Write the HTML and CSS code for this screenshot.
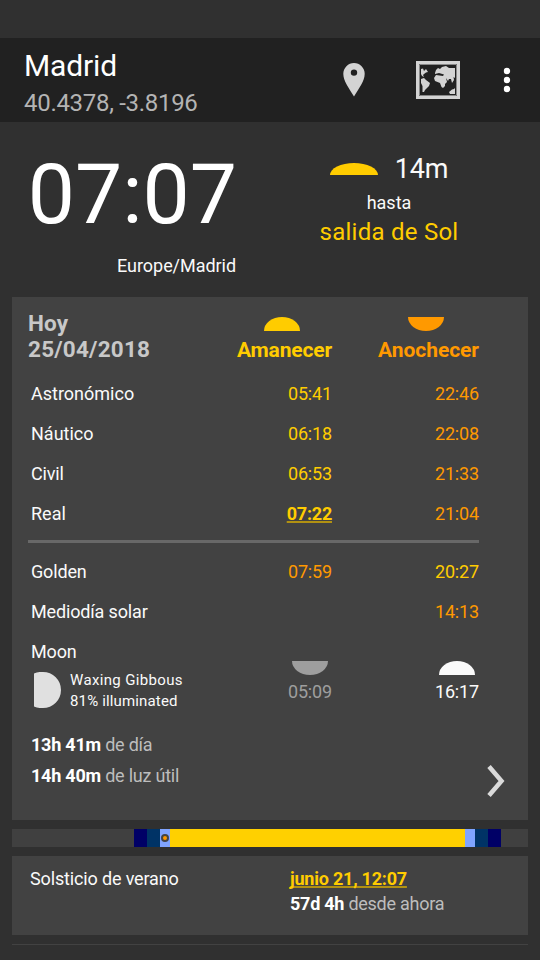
FILE: index.html
```html
<!DOCTYPE html>
<html lang="es">
<head>
<meta charset="utf-8">
<title>Madrid</title>
<link rel="stylesheet" href="styles.css">
</head>
<body>
<header class="appbar">
  <div class="place">
    <h1 class="city">Madrid</h1>
    <div class="coords">40.4378, -3.8196</div>
  </div>
  <svg class="pin" width="22" height="34" viewBox="0 0 22 34"><path fill="#d3d3d3" fill-rule="evenodd" d="M11 0A10.700 10.700 0 0 0 .3 10.700C.3 18 6 25 11 33.500C16 25 21.700 18 21.700 10.700A10.700 10.700 0 0 0 11 0ZM11 6.400a3.200 3.200 0 1 1 0 6.400a3.200 3.200 0 0 1 0-6.400Z"/></svg>
  <svg class="map" width="44" height="38" viewBox="0 0 44 38">
    <path fill="#d3d3d3" fill-rule="evenodd" d="M0 0H44V38H0ZM3 3V35H41V3Z"/>
    <path fill="none" stroke="#888" d="M3.500 3.500H40.500V34.500H3.500Z"/>
    <g fill="#d3d3d3">
      <path d="M5 8L7 7.500L8 10L10 8L12 11L10 11.500L8 13L7 14L8 16L6 15L5 13Z"/>
      <path d="M5 18L8 17L10 19L14 22L13 25L11 27L9 29L8 31H6.500V25L5 22Z"/>
      <path d="M19 12L20 9L22 7L24 8L26 6L30 5L33 7L39 7V17L37.500 16L38 19L36 22L35 18L33 18L32 20L30 17L31 21L29 23L29 25L27 27L25.500 26L24 22L19 20L18 17L20 14L27 15L28 13.500L23 12L19 13Z"/>
      <path d="M33 31L36 28.500L38 28L39 27V33L34 33Z"/>
    </g>
  </svg>
  <svg class="dots" width="8" height="26" viewBox="0 0 8 26"><g fill="#fff"><circle cx="4" cy="4" r="3.200"/><circle cx="4" cy="13" r="3.200"/><circle cx="4" cy="22" r="3.200"/></g></svg>
</header>

<section class="now">
  <div class="clock">
    <div class="time">07:07</div>
    <div class="zone">Europe/Madrid</div>
  </div>
  <div class="next">
    <div class="countdown"><span class="dome sun big"></span><span class="left">14m</span></div>
    <div class="until">hasta</div>
    <div class="event">salida de Sol</div>
  </div>
</section>

<main class="day">
  <div class="grid head">
    <div class="date">Hoy<br>25/04/2018</div>
    <div class="col sunrise"><span class="dome sun"></span><b class="am">Amanecer</b></div>
    <div class="col sunset"><span class="dome set"></span><b class="an">Anochecer</b></div>
  </div>
  <div class="grid row"><span class="name wide">Astronómico</span><span class="yellow">05:41</span><span class="orange">22:46</span></div>
  <div class="grid row"><span class="name wide">Náutico</span><span class="yellow">06:18</span><span class="orange">22:08</span></div>
  <div class="grid row"><span class="name">Civil</span><span class="yellow">06:53</span><span class="orange">21:33</span></div>
  <div class="grid row"><span class="name wide">Real</span><span class="yellow link">07:22</span><span class="orange">21:04</span></div>
  <div class="rule"></div>
  <div class="grid row"><span class="name">Golden</span><span class="orange">07:59</span><span class="yellow">20:27</span></div>
  <div class="grid row"><span class="name">Mediodía solar</span><span></span><span class="orange">14:13</span></div>
  <div class="grid moon">
    <div class="moon-info">
      <div class="moon-name">Moon</div>
      <div class="phase">
        <svg width="27" height="36" viewBox="0 0 27 36"><path fill="#e0e0e0" d="M0 1.500A18 18 0 0 1 9 0A18 18 0 0 1 9 36A18 18 0 0 1 0 34.500Z"/></svg>
        <div class="phase-text">Waxing Gibbous<br><span class="lit">81% illuminated</span></div>
      </div>
    </div>
    <div class="col moonset"><span class="dome down"></span><span>05:09</span></div>
    <div class="col moonrise"><span class="dome up"></span><span>16:17</span></div>
  </div>
  <div class="lengths">
    <div><div class="length"><b>13h 41m</b> de día</div><div class="length"><b>14h 40m</b> de luz útil</div></div>
    <svg class="chevron" width="18" height="32" viewBox="0 0 18 32"><path d="M2 1.500L14.500 16L2 30.500" fill="none" stroke="#dadada" stroke-width="4.500"/></svg>
  </div>
</main>

<div class="timeline">
  <i class="astro"></i><i class="naut"></i><i class="civil"><i class="marker"></i></i><i class="light"></i><i class="civil"></i><i class="naut"></i><i class="astro"></i>
</div>

<section class="solstice">
  <div class="sol-name">Solsticio de verano</div>
  <div><div class="sol-line"><span class="link yellow sol-date">junio 21, 12:07</span></div><div class="sol-line muted"><b>57d 4h</b> desde ahora</div></div>
</section>
<div class="next-card"></div>
</body>
</html>
```
FILE: styles.css
```css
* { box-sizing: border-box; }
body {
  margin: 0; padding-top: 38px; width: 540px; height: 960px; overflow: hidden;
  background: #303030; color: #fafafa;
  font: 18px/20px Roboto, sans-serif; letter-spacing: -.15px; white-space: nowrap;
}
.appbar { height: 84px; background: #212121; display: flex; align-items: center; padding: 0 29px 0 24px; }
.place { width: 319px; padding-top: 10px; }
.city { margin: 0; font-size: 30px; font-weight: 400; line-height: 36px; color: #fff; }
.coords { font-size: 24px; line-height: 38px; letter-spacing: -.3px; color: #b4b4b4; }
.map { margin-left: 51px; }
.dots { margin-left: auto; }

.now { height: 175px; display: flex; }
.clock { flex: none; width: 236px; text-align: right; }
.time { font-size: 84px; line-height: 100px; padding-top: 23px; letter-spacing: 0; margin-right: -1px; color: #fff; }
.zone { line-height: 20px; margin-top: 11px; letter-spacing: -.05px; }
.next { flex: none; width: 306px; text-align: center; padding-top: 31px; }
.countdown { height: 32px; display: flex; justify-content: center; align-items: center; gap: 17px; font-size: 27px; }
.until { margin-top: 8px; letter-spacing: 0; }
.event { font-size: 24px; line-height: 30px; margin-top: 4px; letter-spacing: .25px; color: #ffcc00; }

.dome { display: block; width: 36px; height: 14px; border-radius: 18px 18px 0 0 / 14px 14px 0 0; }
.sun { background: #ffcc00; }
.big { width: 48px; height: 12px; border-radius: 24px 24px 0 0 / 12px 12px 0 0; }
.set, .down { border-radius: 0 0 18px 18px / 0 0 14px 14px; background: #ff9900; }
.down { background: #9e9e9e; }
.up { background: #fafafa; }

.day { margin: 0 12px; height: 523px; padding: 0 16px; background: #424242; }
.grid { display: grid; grid-template-columns: 157px 147px 147px; text-align: right; }
.head { height: 77px; }
.date { text-align: left; font-weight: 700; font-size: 22.5px; line-height: 26px; padding-top: 13px; letter-spacing: .22px; color: #c8c8c8; }
.col { display: flex; flex-direction: column; align-items: flex-end; }
.head .col { padding-top: 20px; font-size: 21px; }
.head .dome { margin: 0 32px 9px; }
.head .set { margin-right: 35px; }
.an { letter-spacing: -.05px; }
.sunrise { color: #ffcc00; }
.sunset { color: #ff9900; }
.row { height: 40px; line-height: 40px; }
.name { text-align: left; padding-left: 3px; }
.wide { letter-spacing: 0; }
.yellow { color: #ffcc00; }
.orange { color: #ff9900; }
.link {
  font-weight: 700; letter-spacing: -.22px; text-decoration: underline; text-decoration-color: #b19112;
  text-decoration-thickness: 2px; text-underline-offset: 1px; text-decoration-skip-ink: none;
}
.rule { width: 451px; height: 3px; margin: 6px 0 9px; background: #686868; }
.moon { height: 97px; }
.moon-info { text-align: left; padding-left: 3px; }
.moon-name { line-height: 40px; }
.phase { display: flex; align-items: center; gap: 9px; padding-left: 3px; height: 36px; }
.phase-text { font-size: 15px; line-height: 21px; letter-spacing: .35px; padding-top: 2px; }
.lit { letter-spacing: .15px; }
.moon .col { padding-top: 29px; }
.moon .dome { margin: 0 4px 7px; }
.moonset { color: #9e9e9e; }
.lengths { display: flex; justify-content: space-between; padding-left: 3px; letter-spacing: -.22px; color: #bdbdbd; }
.length { line-height: 31px; }
.lengths b, .muted b { color: #fff; }
.chevron { margin: 36px 7px 0 0; }

.timeline { display: flex; height: 18px; margin: 9px 12px; padding-left: 122px; background: #404040; }
.timeline > i { display: block; height: 18px; }
.timeline .astro { width: 13px; background: #000066; }
.timeline .naut { width: 13px; background: #003366; }
.timeline .civil { width: 10px; padding: 5px 1px; background: #80a4ff; }
.timeline .light { width: 295px; background: #ffd000; }
.marker { display: block; width: 8px; height: 8px; border: 2px solid #444; border-radius: 50%; background: #ff9900; }
.solstice { display: grid; grid-template-columns: 260px 1fr; height: 79px; margin: 0 12px; padding: 10px 18px; background: #424242; }
.sol-name, .sol-line { line-height: 25px; }
.muted { letter-spacing: -.25px; color: #bdbdbd; }
.next-card { height: 1px; margin: 9px 12px 0; background: #424242; }
```
